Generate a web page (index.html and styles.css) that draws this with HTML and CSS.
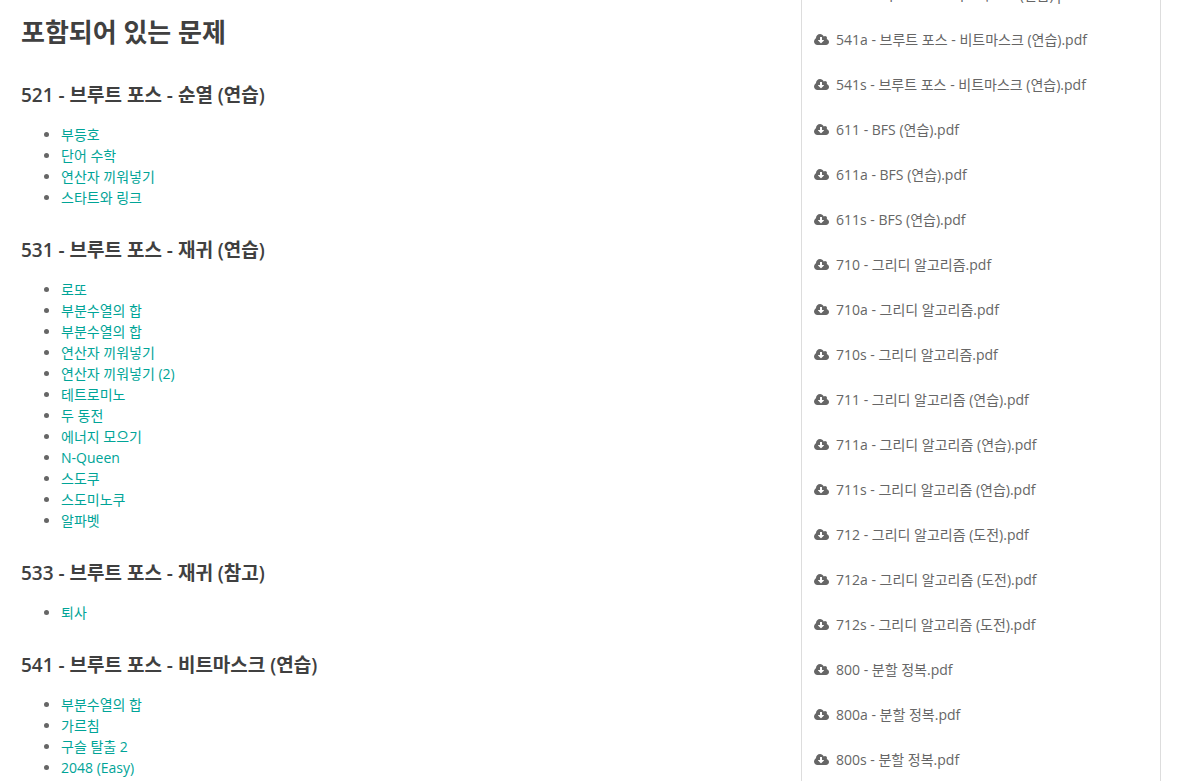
FILE: index.html
```
<!DOCTYPE html>
<html lang="ko">
<head>
<meta charset="utf-8">
<title>포함되어 있는 문제</title>
<link rel="stylesheet" href="styles.css">
</head>
<body>
<svg class="sprite" aria-hidden="true"><symbol id="cloud" viewBox="0 0 1920 1792"><path d="M1280 928q0-14-9-23t-23-9h-224V544q0-13-9.500-22.500T992 512H800q-13 0-22.500 9.500T768 544v352H544q-13 0-22.500 9.500T512 928q0 14 9 23l352 352q9 9 23 9t23-9l351-351q10-12 10-24zm640 224q0 159-112.500 271.500T1536 1536H448q-185 0-316.500-131.500T0 1088q0-130 70-240t188-165q-2-30-2-43 0-212 150-362t362-150q156 0 285.500 87T1242 446q71-62 166-62 106 0 181 75t75 181q0 76-41 138 130 31 213.500 135.500T1920 1152z"/></symbol></svg>
<div class="page">
<main class="problems">
<h2>포함되어 있는 문제</h2>
<h3>521 - 브루트 포스 - 순열 (연습)</h3>
<ul>
<li><a href="#">부등호</a></li>
<li><a href="#">단어 수학</a></li>
<li><a href="#">연산자 끼워넣기</a></li>
<li><a href="#">스타트와 링크</a></li>
</ul>
<h3>531 - 브루트 포스 - 재귀 (연습)</h3>
<ul>
<li><a href="#">로또</a></li>
<li><a href="#">부분수열의 합</a></li>
<li><a href="#">부분수열의 합</a></li>
<li><a href="#">연산자 끼워넣기</a></li>
<li><a href="#">연산자 끼워넣기 (2)</a></li>
<li><a href="#">테트로미노</a></li>
<li><a href="#">두 동전</a></li>
<li><a href="#">에너지 모으기</a></li>
<li><a href="#">N-Queen</a></li>
<li><a href="#">스도쿠</a></li>
<li><a href="#">스도미노쿠</a></li>
<li><a href="#">알파벳</a></li>
</ul>
<h3>533 - 브루트 포스 - 재귀 (참고)</h3>
<ul>
<li><a href="#">퇴사</a></li>
</ul>
<h3>541 - 브루트 포스 - 비트마스크 (연습)</h3>
<ul>
<li><a href="#">부분수열의 합</a></li>
<li><a href="#">가르침</a></li>
<li><a href="#">구슬 탈출 2</a></li>
<li><a href="#">2048 (Easy)</a></li>
</ul>
</main>
<aside class="files">
<a href="#"><svg class="icon"><use href="#cloud"/></svg>541 - 브루트 포스 - 비트마스크 (연습).pdf</a>
<a href="#"><svg class="icon"><use href="#cloud"/></svg>541a - 브루트 포스 - 비트마스크 (연습).pdf</a>
<a href="#"><svg class="icon"><use href="#cloud"/></svg>541s - 브루트 포스 - 비트마스크 (연습).pdf</a>
<a href="#"><svg class="icon"><use href="#cloud"/></svg>611 - BFS (연습).pdf</a>
<a href="#"><svg class="icon"><use href="#cloud"/></svg>611a - BFS (연습).pdf</a>
<a href="#"><svg class="icon"><use href="#cloud"/></svg>611s - BFS (연습).pdf</a>
<a href="#"><svg class="icon"><use href="#cloud"/></svg>710 - 그리디 알고리즘.pdf</a>
<a href="#"><svg class="icon"><use href="#cloud"/></svg>710a - 그리디 알고리즘.pdf</a>
<a href="#"><svg class="icon"><use href="#cloud"/></svg>710s - 그리디 알고리즘.pdf</a>
<a href="#"><svg class="icon"><use href="#cloud"/></svg>711 - 그리디 알고리즘 (연습).pdf</a>
<a href="#"><svg class="icon"><use href="#cloud"/></svg>711a - 그리디 알고리즘 (연습).pdf</a>
<a href="#"><svg class="icon"><use href="#cloud"/></svg>711s - 그리디 알고리즘 (연습).pdf</a>
<a href="#"><svg class="icon"><use href="#cloud"/></svg>712 - 그리디 알고리즘 (도전).pdf</a>
<a href="#"><svg class="icon"><use href="#cloud"/></svg>712a - 그리디 알고리즘 (도전).pdf</a>
<a href="#"><svg class="icon"><use href="#cloud"/></svg>712s - 그리디 알고리즘 (도전).pdf</a>
<a href="#"><svg class="icon"><use href="#cloud"/></svg>800 - 분할 정복.pdf</a>
<a href="#"><svg class="icon"><use href="#cloud"/></svg>800a - 분할 정복.pdf</a>
<a href="#"><svg class="icon"><use href="#cloud"/></svg>800s - 분할 정복.pdf</a>
</aside>
</div>
</body>
</html>
```
FILE: styles.css
```
* { box-sizing: border-box; }
body { margin: 0; background: #fff; color: #666; font: 14px/21px "Open Sans", "Noto Sans CJK KR", sans-serif; overflow: hidden; }
.sprite { display: none; }
.page { display: flex; height: 100vh; padding-right: 42px; }
.problems { flex: 1; padding: 12px 21px 0; overflow: hidden; }
h2, h3 { margin: 0; color: #404040; font-weight: 600; }
h2 { font-size: 26px; line-height: 40px; margin-bottom: 30px; }
h3 { font-size: 19px; line-height: 27px; margin-bottom: 15px; }
ul { margin: 0 0 29px; padding-left: 40px; }
.problems a { color: #00a497; text-decoration: none; }
.files { width: 360px; border: solid #ddd; border-width: 0 1px; overflow: hidden; display: flex; flex-direction: column; }
.files a { flex: none; display: flex; align-items: center; gap: 7px; height: 45px; padding: 0 12px; color: #666; text-decoration: none; white-space: nowrap; }
.files a:first-child { margin-top: -28px; }
.icon { width: 15px; height: 14px; fill: #666; }
```
